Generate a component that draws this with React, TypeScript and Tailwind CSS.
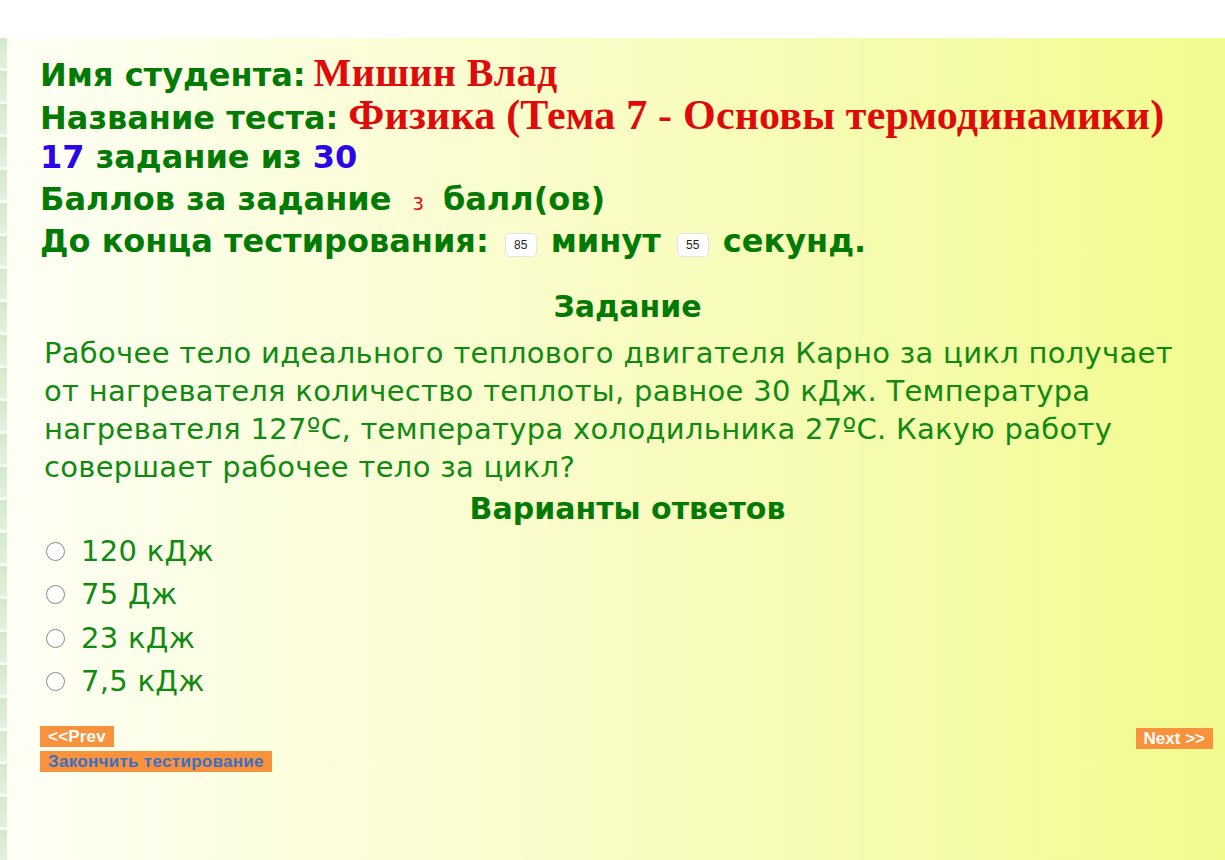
const answers = ['120 кДж', '75 Дж', '23 кДж', '7,5 кДж'];

const TimerBox = ({ value }: { value: string }) => (
  <span className="inline-flex items-center justify-center align-[3px] w-[32px] h-[24px] ml-[16px] mr-[14px] rounded-[5px] bg-white border border-[#e4e4e4] text-[12px] leading-[24px] font-normal text-[#222] font-['Liberation_Sans',Arial,sans-serif]">
    {value}
  </span>
);

const App = () => {
  return (
    <div className="min-h-screen bg-white pt-[38px] font-['DejaVu_Sans',Verdana,sans-serif]">
      <div className="flex min-h-[822px] bg-gradient-to-r from-[#fefff5] via-[#f9fcc4] to-[#f2fb8e]">
        <div className="w-[7px] shrink-0 bg-[repeating-linear-gradient(to_bottom,#d3e9cb_0px,#e4f1de_30px,#f6fbf2_30px,#f6fbf2_33px)]" />
        <div className="flex-1 pl-[33px] pr-[10px] pt-[14px]">
          <div className="text-[32px] font-bold leading-[42px] text-[#037a03] whitespace-nowrap">
            <div className="h-[42px]">
              Имя студента:
              <span className="ml-[8px] font-['Liberation_Serif','Times_New_Roman',serif] text-[40px] tracking-[0.4px] text-[#e00a0a]">Мишин Влад</span>
            </div>
            <div className="h-[42px]">
              Название теста:
              <span className="ml-[10px] font-['Liberation_Serif','Times_New_Roman',serif] text-[42px] tracking-[0.2px] text-[#e00a0a]">
                Физика (Тема 7 - Основы термодинамики)
              </span>
            </div>
            <div className="h-[42px]">
              <span className="text-[#2a06e8]">17</span> задание из <span className="text-[#2a06e8]">30</span>
            </div>
            <div className="h-[42px]">
              Баллов за задание<span className="inline-block text-[18px] font-normal text-[#e00a0a] ml-[21px] mr-[19px]">3</span>балл(ов)
            </div>
            <div className="h-[43px]">
              До конца тестирования:
              <TimerBox value="85" />
              минут
              <TimerBox value="55" />
              секунд.
            </div>
          </div>

          <div className="mt-[24px] text-center text-[30px] font-bold leading-[40px] text-[#037a03]">Задание</div>
          <p className="mt-[7px] pl-[4px] text-[29px] tracking-[0.3px] leading-[38px] text-[#118a11]">
            Рабочее тело идеального теплового двигателя Карно за цикл получает от нагревателя количество теплоты,
            равное 30 кДж. Температура нагревателя 127ºС, температура холодильника 27ºС. Какую работу совершает рабочее
            тело за цикл?
          </p>
          <div className="mt-[3px] text-center text-[30px] font-bold leading-[40px] text-[#037a03]">Варианты ответов</div>

          <div className="mt-[1px] flex flex-col">
            {answers.map((a) => (
              <label key={a} className="flex items-center h-[43.3px] text-[29px] tracking-[0.3px] text-[#118a11]">
                <span className="ml-[6px] mr-[16px] w-[19px] h-[19px] shrink-0 rounded-full border-[1.5px] border-[#8a8a8a] bg-white" />
                {a}
              </label>
            ))}
          </div>

          <div className="mt-[23px] flex justify-between font-['Liberation_Sans',Arial,sans-serif] text-[17px] font-bold">
            <div className="flex flex-col items-start gap-[4px]">
              <button className="h-[21px] px-[8px] bg-[#f9923c] text-white leading-[21px] tracking-[0.2px]">&lt;&lt;Prev</button>
              <button className="h-[21px] px-[8px] bg-[#f9923c] text-[#3a6fc4] leading-[21px] tracking-[0.3px]">Закончить тестирование</button>
            </div>
            <div className="pr-[2px]">
              <button className="h-[21px] px-[8px] bg-[#f9923c] text-white leading-[21px]">Next &gt;&gt;</button>
            </div>
          </div>
        </div>
      </div>
    </div>
  );
};

export default App;
